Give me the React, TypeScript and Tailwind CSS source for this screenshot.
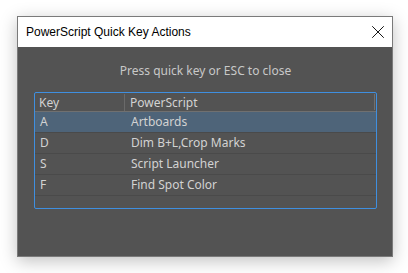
import { X } from 'lucide-react';

const rows = [
  { key: 'A', script: 'Artboards' },
  { key: 'D', script: 'Dim B+L,Crop Marks' },
  { key: 'S', script: 'Script Launcher' },
  { key: 'F', script: 'Find Spot Color' },
];

const App = () => {
  const selected = 'A';

  return (
    <div className="w-[408px] h-[273px] bg-white pt-[16px] pl-[17px] font-['Liberation_Sans',sans-serif]">
      <div className="w-[376px] h-[241px] border border-[#7a7a7a] bg-[#535353] flex flex-col shadow-[0_4px_16px_rgba(0,0,0,0.25)]">
        <div className="h-[30px] bg-white flex items-center justify-between pl-[8px] pr-[3px]">
          <span className="text-[12px] text-black">PowerScript Quick Key Actions</span>
          <X size={22} strokeWidth={1} className="text-black" />
        </div>

        <div className="flex flex-col px-[16px] pr-[15px]">
          <p className="text-center text-[12px] leading-[16px] text-[#c8c8c8] mt-[16px] mb-[13px] font-['Noto_Sans',sans-serif]">
            Press quick key or ESC to close
          </p>

          <div className="h-[117px] border border-[#3f8fe0] rounded-[2px] flex flex-col text-[12px] text-[#d2d2d2] font-['Noto_Sans',sans-serif]">
            <div className="h-[19px] flex items-center border-b border-[#707070]">
              <span className="w-[90px] pl-[4px] border-r border-[#6a6a6a] leading-[17px]">Key</span>
              <span className="flex-1 pl-[5px] leading-[17px]">PowerScript</span>
              <span className="w-[1px] h-[16px] bg-[#707070] mr-[1px]" />
            </div>
            {rows.map((row) => (
              <div
                key={row.key}
                className={
                  row.key === selected
                    ? 'h-[21px] flex items-center bg-[#4e6479] border-b border-[#4a4a4a]'
                    : 'h-[21px] flex items-center border-b border-[#4a4a4a]'
                }
              >
                <span className="w-[91px] pl-[5px]">{row.key}</span>
                <span className="flex-1 pl-[5px]">{row.script}</span>
              </div>
            ))}
          </div>
        </div>
      </div>
    </div>
  );
};

export default App;
